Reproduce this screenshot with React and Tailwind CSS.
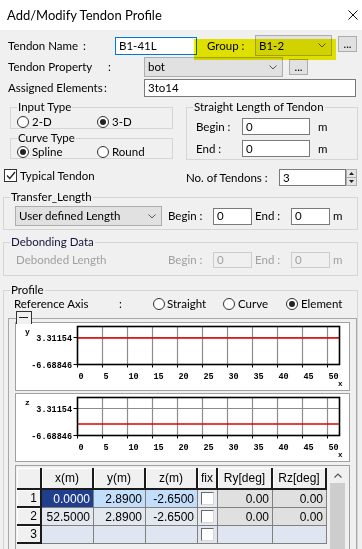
import React from "react";

const Radio = ({ checked }) => (
  <span className="flex h-[12px] w-[12px] shrink-0 items-center justify-center rounded-full border border-[#333] bg-white">
    {checked && <span className="h-[6px] w-[6px] rounded-full bg-[#222]" />}
  </span>
);

const Check = ({ checked }) => (
  <span className="flex h-[13px] w-[13px] shrink-0 items-center justify-center border border-[#333] bg-white">
    {checked && (
      <svg width="10" height="9" viewBox="0 0 10 9">
        <path d="M1 4.5 L3.8 7.5 L9 1" fill="none" stroke="#222" strokeWidth="1.3" />
      </svg>
    )}
  </span>
);

const Chevron = () => (
  <svg width="8" height="5" viewBox="0 0 8 5" className="shrink-0">
    <path d="M0.5 0.5 L4 4 L7.5 0.5" fill="none" stroke="#555" />
  </svg>
);

const Combo = ({ text, className }) => (
  <div className={`flex items-center justify-between border border-[#adadad] bg-[#e1e1e1] pl-[3px] pr-[5px] ${className}`}>
    <span>{text}</span>
    <Chevron />
  </div>
);

const Dots = ({ className }) => (
  <div className={`flex h-[16px] w-[19px] items-end justify-center border border-[#adadad] bg-[#e1e1e1] pb-[2px] leading-none ${className}`}>
    ...
  </div>
);

const Field = ({ text, className, disabled }) => (
  <div
    className={`flex items-center border pl-[3px] ${
      disabled ? "border-[#cccccc] bg-[#f0f0f0] text-[#a0a0a0]" : "border-[#7a7a7a] bg-white"
    } ${className}`}
  >
    {text}
  </div>
);

const GroupBox = ({ title, className, titleClass, children }) => (
  <fieldset className={`border border-[#d5d5d5] ${className}`}>
    <legend className={`ml-[6px] px-[1px] leading-[14px] ${titleClass || ""}`}>{title}</legend>
    {children}
  </fieldset>
);

const ticks = [0, 5, 10, 15, 20, 25, 30, 35, 40, 45, 50];

// small plot of the tendon (x against y or z)
const Chart = ({ axis, redY, className }) => (
  <div className={`h-[69px] w-[335px] border border-[#a0a0a0] bg-white ${className || ""}`}>
    <svg width="333" height="67" className="block" fontFamily="'Liberation Mono', monospace" fontSize="8.5" fontWeight="bold">
      <text x="9" y="11" fontSize="8">{axis}</text>
      {ticks.slice(1).map((t, i) => (
        <line key={t} x1={61.5 + (i + 1) * 25} y1="3.5" x2={61.5 + (i + 1) * 25} y2="41.5" stroke="#8c8c8c" strokeWidth="1.2" />
      ))}
      <line x1="61.5" y1="14.5" x2="323.5" y2="14.5" stroke="#8c8c8c" strokeWidth="1.2" />
      <line x1="61.5" y1={redY} x2="323.5" y2={redY} stroke="#e00000" strokeWidth="1.3" />
      <rect x="61.5" y="3.5" width="262" height="38" fill="none" stroke="#000" strokeWidth="1.6" />
      <line x1="57.5" y1="14.5" x2="61.5" y2="14.5" stroke="#000" />
      <line x1="57.5" y1="41.5" x2="61.5" y2="41.5" stroke="#000" />
      <text x="56" y="17.5" textAnchor="end">3.31154</text>
      <text x="56" y="44.5" textAnchor="end">-6.68846</text>
      {ticks.map((t, i) => (
        <g key={t}>
          <line x1={61.5 + i * 25} y1="41.5" x2={61.5 + i * 25} y2="44.5" stroke="#000" />
          <text x={62.5 + i * 25} y="56">{t}</text>
        </g>
      ))}
      <text x="322" y="63" fontSize="7.5">x</text>
    </svg>
  </div>
);

const head = "flex items-center justify-center border-r-2 border-b-2 border-[#1a1a1a] bg-[#f0f0f0] shadow-[inset_1px_1px_0_#fff]";
const rowHead = "flex items-center justify-end border-r-2 border-b-2 border-[#1a1a1a] bg-[#f0f0f0] pr-[3px] shadow-[inset_1px_1px_0_#fff]";
const cell = "flex items-center justify-end border-r border-b border-[#808080] pr-[3px]";

const FixBox = () => (
  <span className="ml-[3px] h-[13px] w-[13px] border-t border-l border-[#6a6a6a] border-r border-b border-r-[#d8d8d8] border-b-[#d8d8d8] bg-white" />
);

export default function App() {
  return (
    <div className="h-[549px] w-[362px] overflow-hidden whitespace-nowrap bg-[#f0f0f0] font-['Lato',sans-serif] text-[11.5px] leading-[14px] text-black">
      {/* title bar */}
      <div className="flex h-[30px] items-center justify-between bg-white pl-[7px] pr-[4px]">
        <span className="text-[13px]">Add/Modify Tendon Profile</span>
        <svg width="10" height="10" viewBox="0 0 10 10">
          <path d="M0.5 0.5 L9.5 9.5 M9.5 0.5 L0.5 9.5" stroke="#111" strokeWidth="1" />
        </svg>
      </div>

      {/* name / group */}
      <div className="relative mt-[5px] flex h-[21px] items-center">
        <div className="pointer-events-none absolute left-[194px] top-[4px] z-20 h-[21px] w-[142px] bg-[#eeee00] mix-blend-multiply" />
        <span className="ml-[8px] w-[75px]">Tendon Name</span>
        <span className="w-[32px]">:</span>
        <div className="flex h-[18px] w-[82px] items-center border border-[#0078d7] bg-white pl-[3px]">B1-41L</div>
        <span className="ml-[10px] w-[48px]">Group :</span>
        <Combo className="h-[21px] w-[77px]" text="B1-2" />
        <Dots className="ml-[6px] -mt-[3px]" />
      </div>

      <div className="mt-[1px] flex h-[20px] items-center">
        <span className="ml-[8px] w-[100px]">Tendon Property</span>
        <span className="w-[36px]">:</span>
        <Combo className="h-[20px] w-[139px]" text="bot" />
        <Dots className="ml-[6px]" />
      </div>

      <div className="mt-[2px] flex h-[18px] items-center">
        <span className="ml-[8px] w-[96px]">Assigned Elements</span>
        <span className="w-[40px]">:</span>
        <Field className="h-[18px] w-[212px]" text="3to14" />
      </div>

      {/* types + straight length */}
      <div className="mt-[3px] flex">
        <div className="ml-[4px] w-[170px]">
          <GroupBox title="Input Type" className="ml-[6px] w-[163px]">
            <div className="mt-[2px] flex h-[12px] items-center">
              <span className="ml-[6px] flex w-[80px] items-center gap-[3px]">
                <Radio />
                2-D
              </span>
              <span className="flex items-center gap-[3px]">
                <Radio checked />
                3-D
              </span>
            </div>
          </GroupBox>
          <GroupBox title="Curve Type" className="ml-[6px] mt-[2px] w-[163px]">
            <div className="mt-[1px] flex h-[12px] items-center">
              <span className="ml-[6px] flex w-[80px] items-center gap-[3px]">
                <Radio checked />
                Spline
              </span>
              <span className="flex items-center gap-[3px]">
                <Radio />
                Round
              </span>
            </div>
          </GroupBox>
          <div className="mt-[10px] flex h-[13px] items-center gap-[3px]">
            <Check checked />
            Typical Tendon
          </div>
        </div>

        <div className="ml-[12px] w-[172px]">
          <GroupBox title="Straight Length of Tendon" className="w-[172px] pb-[2px]">
            <div className="mt-[4px] flex h-[17px] items-center">
              <span className="ml-[9px] w-[46px]">Begin :</span>
              <Field className="h-[17px] w-[68px]" text="0" />
              <span className="ml-[8px]">m</span>
            </div>
            <div className="mt-[5px] flex h-[17px] items-center">
              <span className="ml-[9px] w-[46px]">End :</span>
              <Field className="h-[17px] w-[68px]" text="0" />
              <span className="ml-[8px]">m</span>
            </div>
          </GroupBox>
          <div className="mt-[9px] flex h-[17px] items-center">
            <span className="w-[93px]">No. of Tendons :</span>
            <Field className="h-[17px] w-[67px]" text="3" />
            <div className="flex h-[17px] w-[11px] flex-col border border-[#adadad] bg-[#e6e6e6]">
              <div className="flex flex-1 items-center justify-center border-b border-[#adadad]">
                <svg width="5" height="3" viewBox="0 0 5 3"><path d="M0 3 L2.5 0 L5 3Z" fill="#222" /></svg>
              </div>
              <div className="flex flex-1 items-center justify-center">
                <svg width="5" height="3" viewBox="0 0 5 3"><path d="M0 0 L2.5 3 L5 0Z" fill="#222" /></svg>
              </div>
            </div>
          </div>
        </div>
      </div>

      {/* transfer length */}
      <GroupBox title="Transfer_Length" className="ml-[3px] mt-[4px] w-[355px] pb-[3px]">
        <div className="mt-[2px] flex h-[20px] items-center">
          <Combo className="ml-[11px] h-[20px] w-[147px]" text="User defined Length" />
          <span className="ml-[6px] w-[45px]">Begin :</span>
          <Field className="h-[17px] w-[39px]" text="0" />
          <span className="ml-[3px] w-[36px]">End :</span>
          <Field className="h-[17px] w-[39px]" text="0" />
          <span className="ml-[3px]">m</span>
        </div>
      </GroupBox>

      {/* debonding */}
      <GroupBox title="Debonding Data" titleClass="text-[#14143c]" className="ml-[3px] mt-[5px] w-[355px] pb-[7px]">
        <div className="mt-[3px] flex h-[16px] items-center text-[#a0a0a0]">
          <span className="ml-[12px] w-[152px]">Debonded Length</span>
          <span className="w-[45px]">Begin :</span>
          <Field disabled className="h-[16px] w-[39px]" text="0" />
          <span className="ml-[3px] w-[36px]">End :</span>
          <Field disabled className="h-[16px] w-[39px]" text="0" />
          <span className="ml-[3px]">m</span>
        </div>
      </GroupBox>

      {/* profile */}
      <GroupBox title="Profile" className="ml-[3px] mt-[7px] w-[355px] pb-[10px]">
        <div className="flex h-[14px] items-center">
          <span className="ml-[10px] w-[105px]">Reference Axis</span>
          <span className="w-[34px]">:</span>
          <span className="flex w-[70px] items-center gap-[2px]">
            <Radio />
            Straight
          </span>
          <span className="flex w-[63px] items-center gap-[3px]">
            <Radio />
            Curve
          </span>
          <span className="flex items-center gap-[3px]">
            <Radio checked />
            Element
          </span>
        </div>

        <div className="relative z-10 ml-[12px] h-[13px] w-[16px] border-l border-r border-t border-[#333] bg-[#f0f0f0] pt-[5px]">
          <div className="ml-[2px] h-[1px] w-[9px] bg-[#222]" />
        </div>

        <div className="relative -mt-[6px] ml-[4px] w-[349px] border-l border-r border-t border-[#a8a8a8] pl-[6px] pt-[3px]">
          <Chart axis="y" redY={15} />
          <Chart axis="z" redY={30} className="mt-[2px]" />

          <div className="mt-[3px] flex h-[100px] w-[335px] border border-[#a0a0a0] bg-[#f0f0f0] pl-[1px] pt-[2px] font-['Liberation_Sans',sans-serif] text-[12px]">
            <div className="grid h-[76px] w-[310px] grid-cols-[25px_52px_52px_52px_20px_55px_54px] grid-rows-[22px_18px_18px_18px]">
              <div className={head} />
              <div className={head}>x(m)</div>
              <div className={head}>y(m)</div>
              <div className={head}>z(m)</div>
              <div className={head}>fix</div>
              <div className={head}>Ry[deg]</div>
              <div className={head}>Rz[deg]</div>

              <div className={rowHead}>1</div>
              <div className={`${cell} bg-[#213e8c] text-white`}>0.0000</div>
              <div className={`${cell} bg-[#c3defa]`}>2.8900</div>
              <div className={`${cell} bg-[#c3defa]`}>-2.6500</div>
              <div className="flex items-center border-r border-b border-[#808080] bg-[#e6e9ef]"><FixBox /></div>
              <div className={`${cell} bg-[#e0e0e0]`}>0.00</div>
              <div className={`${cell} bg-[#e0e0e0]`}>0.00</div>

              <div className={rowHead}>2</div>
              <div className={`${cell} bg-[#e3e8ef]`}>52.5000</div>
              <div className={`${cell} bg-[#e3e8ef]`}>2.8900</div>
              <div className={`${cell} bg-[#e3e8ef]`}>-2.6500</div>
              <div className="flex items-center border-r border-b border-[#808080] bg-[#e6e9ef]"><FixBox /></div>
              <div className={`${cell} bg-[#e0e0e0]`}>0.00</div>
              <div className={`${cell} bg-[#e0e0e0]`}>0.00</div>

              <div className={rowHead}>3</div>
              <div className={`${cell} bg-[#dfe6f1]`} />
              <div className={`${cell} bg-[#dfe6f1]`} />
              <div className={`${cell} bg-[#dfe6f1]`} />
              <div className="flex items-center border-r border-b border-[#808080] bg-[#dfe6f1]"><FixBox /></div>
              <div className={`${cell} bg-[#dfe6f1]`} />
              <div className={`${cell} bg-[#dfe6f1]`} />
            </div>

            <div className="ml-[3px] flex w-[16px] flex-col">
              <div className="flex h-[15px] items-center justify-center">
                <svg width="8" height="5" viewBox="0 0 8 5"><path d="M0.5 4.5 L4 1 L7.5 4.5" fill="none" stroke="#555" strokeWidth="1.2" /></svg>
              </div>
              <div className="h-[80px] w-[15px] bg-[#cdcdcd]" />
            </div>
          </div>
        </div>
      </GroupBox>
    </div>
  );
}
